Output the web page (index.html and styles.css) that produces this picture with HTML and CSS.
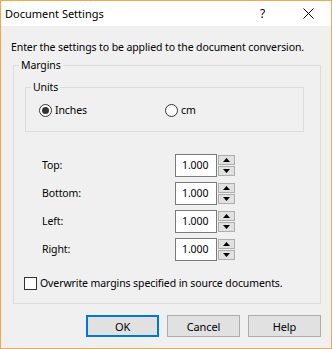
FILE: index.html
```html
<!DOCTYPE html>
<html>
<head>
<meta charset="utf-8">
<link rel="stylesheet" href="styles.css">
</head>
<body>
<div class="window">
  <div class="titlebar">
    <span class="title">Document Settings</span>
    <span class="help">?</span>
    <svg class="close" width="11" height="11" viewBox="0 0 11 11"><path d="M0.5 0.5 L10.5 10.5 M10.5 0.5 L0.5 10.5" stroke="#000" stroke-width="1" fill="none"/></svg>
  </div>
  <div class="content">
    <p class="intro">Enter the settings to be applied to the document conversion.</p>
    <fieldset class="group margins">
      <legend>Margins</legend>
      <fieldset class="group units">
        <legend>Units</legend>
        <div class="radios">
          <label class="radio first"><span class="dot checked"></span>Inches</label>
          <label class="radio"><span class="dot"></span>cm</label>
        </div>
      </fieldset>
      <div class="fields">
        <div class="row"><span class="lbl">Top:</span><div class="spin"><span class="val">1.000</span><div class="arrows"><span class="btn"><svg width="7" height="4" viewBox="0 0 7 4"><path d="M3.5 0 L7 4 L0 4 Z" fill="#000"/></svg></span><span class="btn"><svg width="7" height="4" viewBox="0 0 7 4"><path d="M0 0 L7 0 L3.5 4 Z" fill="#000"/></svg></span></div></div></div>
        <div class="row"><span class="lbl">Bottom:</span><div class="spin"><span class="val">1.000</span><div class="arrows"><span class="btn"><svg width="7" height="4" viewBox="0 0 7 4"><path d="M3.5 0 L7 4 L0 4 Z" fill="#000"/></svg></span><span class="btn"><svg width="7" height="4" viewBox="0 0 7 4"><path d="M0 0 L7 0 L3.5 4 Z" fill="#000"/></svg></span></div></div></div>
        <div class="row"><span class="lbl">Left:</span><div class="spin"><span class="val">1.000</span><div class="arrows"><span class="btn"><svg width="7" height="4" viewBox="0 0 7 4"><path d="M3.5 0 L7 4 L0 4 Z" fill="#000"/></svg></span><span class="btn"><svg width="7" height="4" viewBox="0 0 7 4"><path d="M0 0 L7 0 L3.5 4 Z" fill="#000"/></svg></span></div></div></div>
        <div class="row"><span class="lbl">Right:</span><div class="spin"><span class="val">1.000</span><div class="arrows"><span class="btn"><svg width="7" height="4" viewBox="0 0 7 4"><path d="M3.5 0 L7 4 L0 4 Z" fill="#000"/></svg></span><span class="btn"><svg width="7" height="4" viewBox="0 0 7 4"><path d="M0 0 L7 0 L3.5 4 Z" fill="#000"/></svg></span></div></div></div>
      </div>
      <label class="check"><span class="box"></span>Overwrite margins specified in source documents.</label>
    </fieldset>
    <div class="buttons">
      <button class="button default">OK</button>
      <button class="button">Cancel</button>
      <button class="button">Help</button>
    </div>
  </div>
</div>
</body>
</html>
```

FILE: styles.css
```css
* { box-sizing: border-box; }
html, body { margin: 0; padding: 0; background: #f0f0f0; }
body {
  font-family: "Noto Sans", "Liberation Sans", sans-serif;
  font-size: 10.5px;
  letter-spacing: -0.1px;
  line-height: 15px;
  color: #000;
  white-space: nowrap;
}
.window {
  width: 332px;
  height: 349px;
  border: 1px solid #f2a94e;
  background: #f0f0f0;
  display: flex;
  flex-direction: column;
}
.titlebar {
  height: 25px;
  background: #fff;
  display: flex;
  align-items: center;
  padding-left: 4px;
  flex: none;
}
.title { font-size: 11px; letter-spacing: 0; }
.help { margin-left: auto; width: 5px; margin-right: 38px; font-size: 12px; letter-spacing: 0; }
.close { margin-right: 17px; display: block; }
.content {
  padding: 14px 0 0 10px;
  flex: 1;
}
.intro { margin: 0; }
.group {
  margin: 0;
  padding: 0;
  border: 1px solid #dcdcdc;
  min-inline-size: 0;
}
.group legend {
  padding: 0 2px;
  margin-left: 5px;
  line-height: 15px;
}
.margins {
  margin: 3px 0 0 2px;
  width: 308px;
  padding-bottom: 13px;
}
.units {
  margin: 7px 0 0 11px;
  width: 279px;
}
.radios {
  display: flex;
  padding: 9px 0 14px 13px;
}
.radio {
  display: flex;
  align-items: center;
  height: 13px;
  gap: 3px;
}
.radio.first { width: 126px; }
.dot {
  width: 13px;
  height: 13px;
  border-radius: 50%;
  border: 1px solid #333;
  background: #fff;
  display: flex;
  align-items: center;
  justify-content: center;
}
.dot.checked::after {
  content: "";
  width: 7px;
  height: 7px;
  border-radius: 50%;
  background: #333;
}
.fields {
  display: flex;
  flex-direction: column;
  gap: 5px;
  margin-top: 22px;
  padding-left: 28px;
}
.row {
  display: flex;
  align-items: center;
  height: 23px;
}
.lbl { width: 133px; }
.spin { display: flex; height: 23px; }
.val {
  width: 42px;
  height: 23px;
  border: 1px solid #7a7a7a;
  background: #fff;
  padding-left: 6px;
  display: flex;
  align-items: center;
}
.arrows {
  margin-left: 1px;
  padding-top: 1px;
  display: flex;
  flex-direction: column;
  gap: 1px;
}
.btn {
  width: 17px;
  height: 10px;
  border: 1px solid #adadad;
  background: #e1e1e1;
  display: flex;
  align-items: center;
  justify-content: center;
}
.btn svg { display: block; }
.check {
  display: flex;
  align-items: center;
  gap: 3px;
  margin-top: 16px;
  padding-left: 10px;
  height: 13px;
}
.box {
  width: 13px;
  height: 13px;
  border: 1px solid #333;
  background: #fff;
  flex: none;
}
.buttons {
  display: flex;
  justify-content: flex-end;
  gap: 8px;
  width: 308px;
  margin: 11px 0 0 2px;
}
.button {
  width: 73px;
  height: 22px;
  border: 1px solid #adadad;
  background: #e1e1e1;
  font-family: inherit;
  font-size: 11px;
  letter-spacing: -0.1px;
  color: #000;
  padding: 0;
}
.button.default { border: 2px solid #0078d7; }
```
